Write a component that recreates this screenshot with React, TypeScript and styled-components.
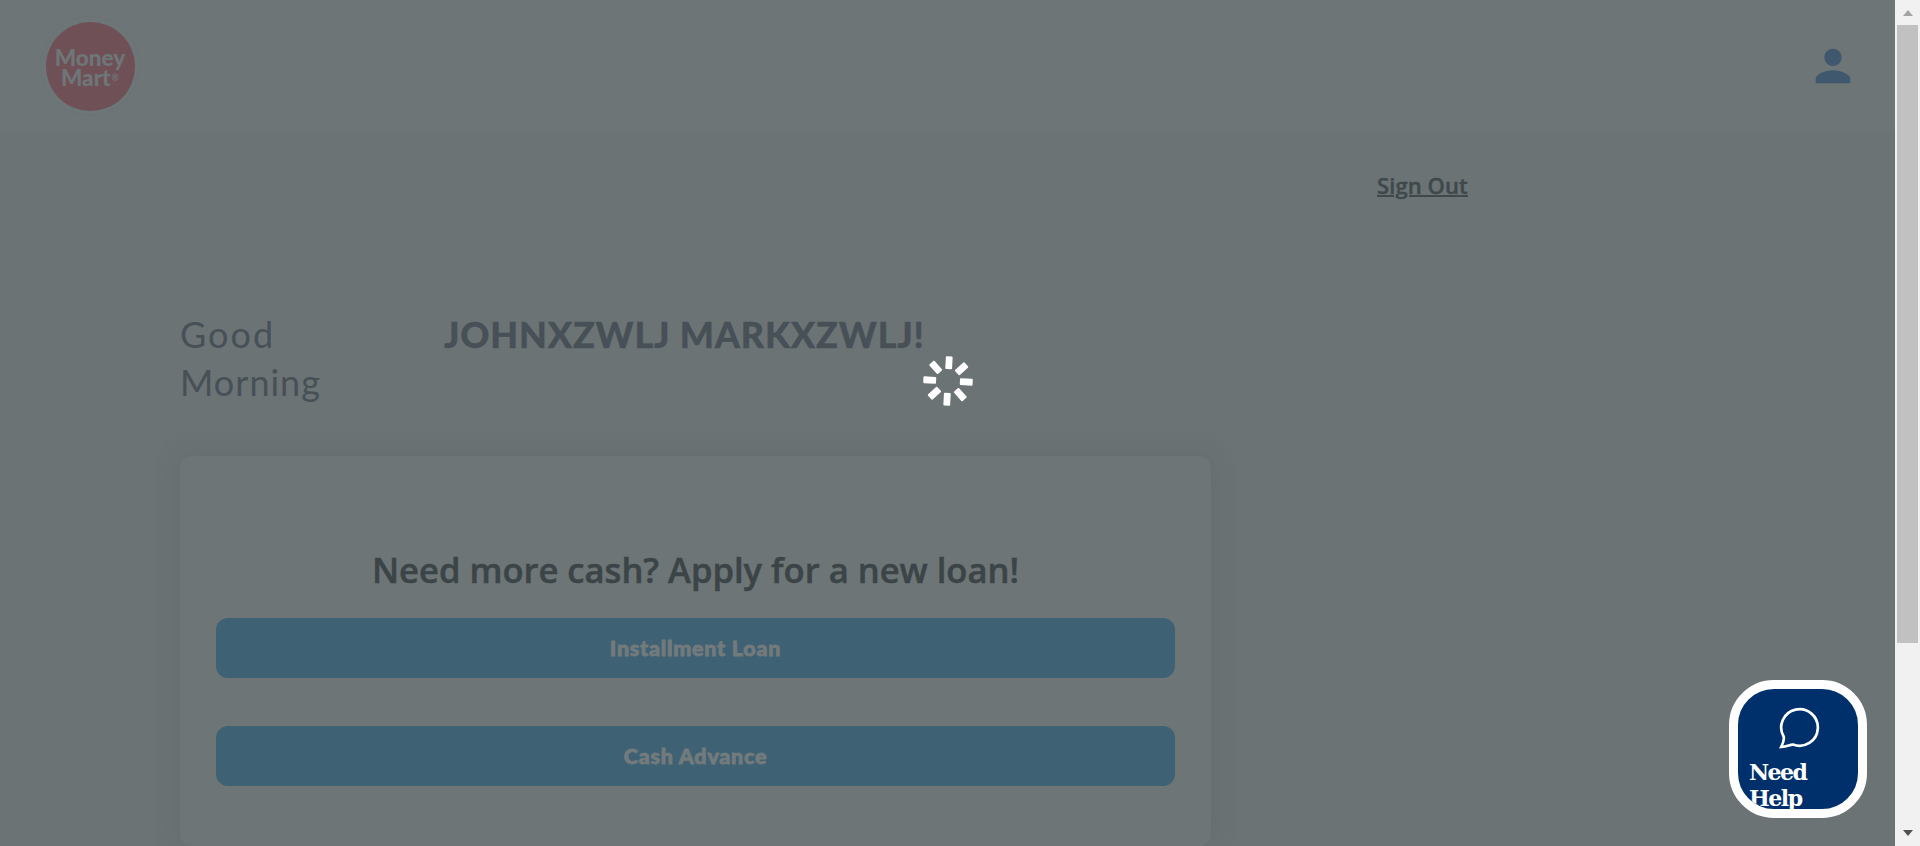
import React from "react";
import styled, { createGlobalStyle } from "styled-components";

const Global = createGlobalStyle`
  * { box-sizing: border-box; }
  html, body { margin: 0; height: 100%; overflow: hidden; background: #6b7476; }
`;

const Screen = styled.div`
  display: flex;
  width: 1920px;
  height: 846px;
  overflow: hidden;
  position: relative;
  font-family: Lato, "Open Sans", sans-serif;
`;

const Page = styled.div`
  flex: 1;
  display: flex;
  flex-direction: column;
  background: #6b7375;
`;

const Header = styled.header`
  flex: none;
  height: 132px;
  padding: 0 36px 0 40px;
  display: flex;
  align-items: center;
  justify-content: space-between;
  background: #6d7577;
`;

const Logo = styled.div`
  width: 100px;
  height: 100px;
  border-radius: 50%;
  border: 1px solid #6b7375;
  display: flex;
  align-items: center;
  justify-content: center;
`;

const LogoDisc = styled.div`
  width: 89px;
  height: 89px;
  padding-top: 4px;
  border-radius: 50%;
  background: #6e5056;
  color: #6e7678;
  display: flex;
  flex-direction: column;
  align-items: center;
  justify-content: center;
  font-size: 22.5px;
  line-height: 20px;
  font-weight: 900;
`;

const LogoLine = styled.div`
  display: flex;
  align-items: center;
`;

const Registered = styled.span`
  font-size: 9px;
  line-height: 8px;
  font-weight: 700;
  margin-left: 1px;
`;

const Main = styled.main`
  flex: 1;
  display: flex;
  flex-direction: column;
  padding: 38px 0 0 180px;
`;

const SignOut = styled.a`
  align-self: flex-start;
  margin-left: 1197px;
  font: 600 22px/30px "Open Sans", sans-serif;
  letter-spacing: 0.1px;
  color: #3f484a;
  -webkit-text-stroke: 0.4px #3f484a;
  text-decoration: underline;
  text-decoration-thickness: 2px;
`;

const Greeting = styled.div`
  display: flex;
  height: 96px;
  margin-top: 110px;
  color: #475056;
  font-size: 36px;
  line-height: 48px;
`;

const Salutation = styled.div`
  width: 264px;
  padding-right: 60px;
  letter-spacing: 1px;
`;

const FirstWord = styled.span`
  letter-spacing: 2px;
`;

const Name = styled.div`
  font-weight: 900;
  white-space: nowrap;
  letter-spacing: 0.8px;
  -webkit-text-stroke: 0.3px #475056;
`;

const Card = styled.section`
  width: 1031px;
  height: 390px;
  margin-top: 50px;
  padding: 90px 36px 0;
  border-radius: 12px;
  background: #6d7577;
  box-shadow: 0 0 24px rgba(84, 92, 94, 0.3);
  display: flex;
  flex-direction: column;
`;

const CardTitle = styled.h2`
  margin: 0 0 24px;
  height: 48px;
  text-align: center;
  font: 600 34.6px/48px "Open Sans", sans-serif;
  color: #3b4446;
  -webkit-text-stroke: 0.5px #3b4446;
  white-space: nowrap;
`;

const LoanButton = styled.button`
  flex: none;
  height: 60px;
  margin-bottom: 48px;
  border: 0;
  border-radius: 12px;
  background: #3e6173;
  color: #727a7c;
  font: 900 21.5px/58px Lato, sans-serif;
  letter-spacing: 0.75px;
  -webkit-text-stroke: 0.9px #727a7c;
  padding: 0 0 1px;
`;

const Spinner = styled.svg`
  position: absolute;
  left: 922px;
  top: 355px;
`;

const HelpButton = styled.div`
  position: absolute;
  left: 1729px;
  top: 680px;
  width: 138px;
  height: 138px;
  border: 9px solid #fff;
  border-radius: 45px;
  background: #00306b;
  color: #fff;
  overflow: hidden;
  padding: 18px 11px 0;
`;

const HelpIcon = styled.svg`
  display: block;
  margin-left: 29px;
`;

const HelpLabel = styled.div`
  margin-top: 8px;
  font: 700 22px/26px "DejaVu Serif", serif;
  letter-spacing: -1.5px;
`;

const Scrollbar = styled.div`
  flex: none;
  width: 25px;
  height: 846px;
  background: #f1f1f1;
  display: flex;
  flex-direction: column;
  align-items: center;
`;

const Thumb = styled.div`
  width: 21px;
  height: 618px;
  background: #c1c1c1;
`;

const Arrow = styled.div<{ $down?: boolean }>`
  width: 0;
  height: 0;
  border: 5.5px solid transparent;
  ${(p) =>
    p.$down
      ? "border-top: 6px solid #505050; border-bottom: 0; margin-top: 187px;"
      : "border-bottom: 6px solid #a3a3a3; border-top: 0; margin: 10px 0 9px;"}
`;

export default function App() {
  return (
    <>
      <Global />
      <Screen>
        <Page>
          <Header>
            <Logo>
              <LogoDisc>
                <LogoLine>Money</LogoLine>
                <LogoLine>
                  Mart<Registered>®</Registered>
                </LogoLine>
              </LogoDisc>
            </Logo>
            <svg width="52" height="52" viewBox="0 0 24 24" fill="#3f586d">
              <path d="M12 12c2.21 0 4-1.79 4-4s-1.79-4-4-4-4 1.79-4 4 1.79 4 4 4zm0 2c-2.67 0-8 1.34-8 4v2h16v-2c0-2.66-5.33-4-8-4z" />
            </svg>
          </Header>
          <Main>
            <SignOut>Sign Out</SignOut>
            <Greeting>
              <Salutation>
                <FirstWord>Good</FirstWord> Morning
              </Salutation>
              <Name>JOHNXZWLJ MARKXZWLJ!</Name>
            </Greeting>
            <Card>
              <CardTitle>Need more cash? Apply for a new loan!</CardTitle>
              <LoanButton>Installment Loan</LoanButton>
              <LoanButton>Cash Advance</LoanButton>
            </Card>
          </Main>
        </Page>
        <Scrollbar>
          <Arrow />
          <Thumb />
          <Arrow $down />
        </Scrollbar>
        <Spinner width="52" height="52" viewBox="-26 -26 52 52" fill="#fff">
          {[3, 48, 93, 138, 183, 228, 273, 318].map((angle) => (
            <rect key={angle} x="-3.4" y="-24.7" width="6.8" height="12.8" rx="1" transform={`rotate(${angle})`} />
          ))}
        </Spinner>
        <HelpButton>
          <HelpIcon width="44" height="44" viewBox="0 0 44 44" fill="none" stroke="#fff" strokeWidth="2.7" strokeLinejoin="miter">
            <path d="M3.2 40 C5.2 36 6.2 31.5 5.6 29.5 A18.3 18.3 0 1 1 15 37.6 C11.8 37.4 9.5 39.6 3.2 40Z" />
          </HelpIcon>
          <HelpLabel>
            Need
            <br />
            Help
          </HelpLabel>
        </HelpButton>
      </Screen>
    </>
  );
}
